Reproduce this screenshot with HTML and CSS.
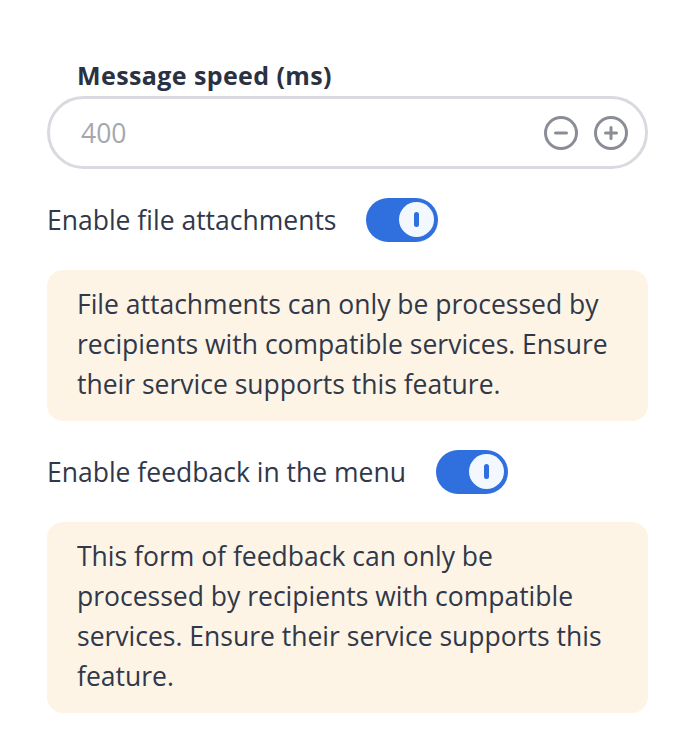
FILE: index.html
```html
<!DOCTYPE html>
<html lang="en">
<head>
    <meta charset="UTF-8">
    <meta name="viewport" content="width=device-width, initial-scale=1.0">
    <title>Message settings</title>
    <link rel="stylesheet" href="styles.css">
</head>
<body>
    <div class="settings">
        <div class="field">
            <label for="speed" class="field-label">Message speed (ms)</label>
            <div class="number-input">
                <input type="text" id="speed" name="speed" placeholder="400">
                <button type="button" class="step-btn" aria-label="Decrease">
                    <svg width="36" height="36" viewBox="0 0 36 36">
                        <circle cx="18" cy="18" r="15.5" fill="none" stroke="#8a8d96" stroke-width="3"/>
                        <line x1="12.5" y1="18" x2="23.5" y2="18" stroke="#8a8d96" stroke-width="3" stroke-linecap="round"/>
                    </svg>
                </button>
                <button type="button" class="step-btn" aria-label="Increase">
                    <svg width="36" height="36" viewBox="0 0 36 36">
                        <circle cx="18" cy="18" r="15.5" fill="none" stroke="#8a8d96" stroke-width="3"/>
                        <line x1="12.5" y1="18" x2="23.5" y2="18" stroke="#8a8d96" stroke-width="3" stroke-linecap="round"/>
                        <line x1="18" y1="12.5" x2="18" y2="23.5" stroke="#8a8d96" stroke-width="3" stroke-linecap="round"/>
                    </svg>
                </button>
            </div>
        </div>

        <div class="toggle-row">
            <span>Enable file attachments</span>
            <button type="button" class="toggle on" role="switch" aria-checked="true"><span class="knob"></span></button>
        </div>
        <div class="notice">
            File attachments can only be processed by recipients with compatible services. Ensure their service supports this feature.
        </div>

        <div class="toggle-row">
            <span>Enable feedback in the menu</span>
            <button type="button" class="toggle on" role="switch" aria-checked="true"><span class="knob"></span></button>
        </div>
        <div class="notice">
            This form of feedback can only be processed by recipients with compatible services. Ensure their service supports this feature.
        </div>
    </div>
</body>
</html>
```

FILE: styles.css
```css
body {
    margin: 0;
    background-color: #ffffff;
    font-family: "Open Sans", Lato, sans-serif;
    color: #303849;
}
.settings {
    width: 601px;
    padding: 60px 0 0 47px;
}
.field-label {
    display: block;
    padding-left: 30px;
    font-size: 25px;
    font-weight: bold;
    letter-spacing: 0.4px;
    line-height: 30px;
    color: #2a3142;
    margin-bottom: 6px;
}
.number-input {
    display: flex;
    align-items: center;
    gap: 14px;
    height: 67px;
    border: 3px solid #d9dadf;
    border-radius: 40px;
    padding: 0 16px 0 31px;
}
.number-input input {
    flex: 1;
    border: none;
    outline: none;
    font-family: inherit;
    font-size: 26.5px;
    color: #303849;
    padding: 0;
    background: transparent;
}
.number-input input::placeholder {
    color: #a4a7ae;
}
.step-btn {
    background: none;
    border: none;
    padding: 0;
    width: 36px;
    height: 36px;
    cursor: pointer;
}
.toggle-row {
    display: flex;
    align-items: center;
    gap: 30px;
    margin-top: 29px;
    font-size: 26.5px;
}
.toggle {
    position: relative;
    width: 72px;
    height: 44px;
    border: none;
    border-radius: 22px;
    background-color: #2f6fde;
    padding: 0;
    cursor: pointer;
}
.knob {
    position: absolute;
    top: 4px;
    right: 4px;
    width: 35px;
    height: 35px;
    border-radius: 50%;
    background-color: #f3f7fe;
}
.knob::after {
    content: "";
    position: absolute;
    left: 15px;
    top: 10px;
    width: 5px;
    height: 15px;
    border-radius: 3px;
    background-color: #2f6fde;
}
.notice {
    margin-top: 28px;
    background-color: #fdf4e6;
    border-radius: 16px;
    padding: 14px 30px 17px;
    font-size: 26.5px;
    line-height: 40px;
}
```
